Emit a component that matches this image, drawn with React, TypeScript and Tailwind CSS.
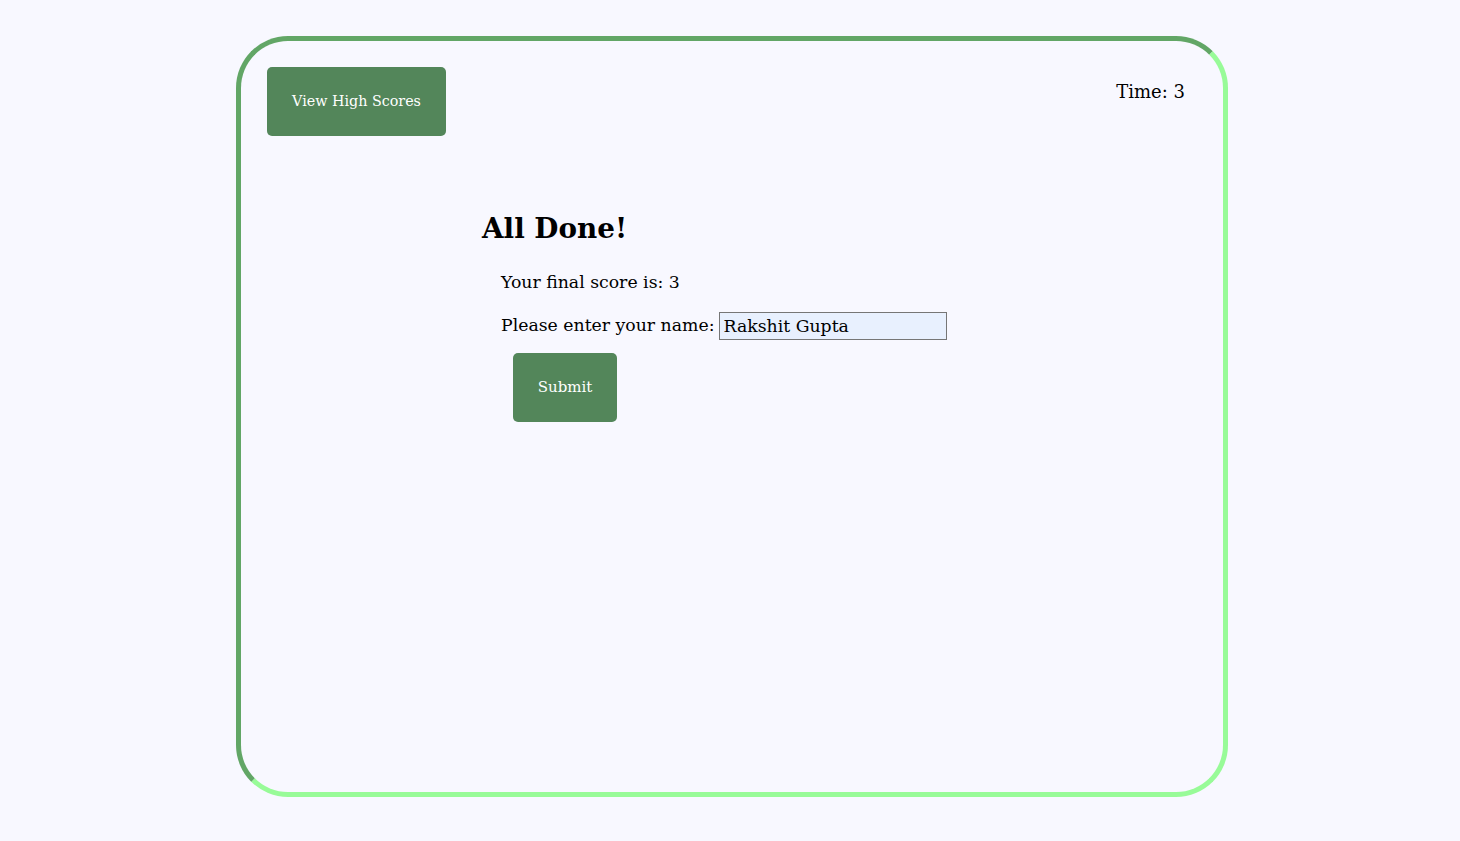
export default function App() {
  return (
    <div className="min-h-[841px] w-full bg-[#f8f8ff] pt-[36px] font-['DejaVu_Serif',Georgia,serif] text-black">
      <div className="relative ml-[236px] flex h-[761px] w-[992px] flex-col rounded-[52px] border-[5px] border-l-[#62a666] border-t-[#62a666] border-r-[#98fb98] border-b-[#98fb98] px-[26px] pt-[26px]">
        <div className="flex items-start justify-between">
          <button className="h-[69px] w-[179px] rounded-[5px] bg-[#53865a] text-[14.3px] text-white">
            View High Scores
          </button>
          <div className="mr-[12px] mt-[11px] text-[18px]">Time: 3</div>
        </div>
        <div className="ml-[215px] mt-[73px] flex flex-col">
          <h1 className="text-[27.8px] font-bold leading-[40px]">All Done!</h1>
          <p className="ml-[19px] mt-[20px] text-[17.3px] leading-[26px]">Your final score is: 3</p>
          <div className="ml-[19px] mt-[17px] flex items-center gap-[5px] text-[17.3px]">
            <span>Please enter your name:</span>
            <input
              defaultValue="Rakshit Gupta"
              className="h-[28px] w-[228px] border border-[#767676] bg-[#e8f0fe] px-[3px] text-[17.3px] font-['DejaVu_Serif',Georgia,serif] outline-none"
            />
          </div>
          <button className="ml-[31px] mt-[13px] h-[69px] w-[104px] rounded-[5px] bg-[#53865a] text-[15px] text-white">
            Submit
          </button>
        </div>
      </div>
    </div>
  )
}
